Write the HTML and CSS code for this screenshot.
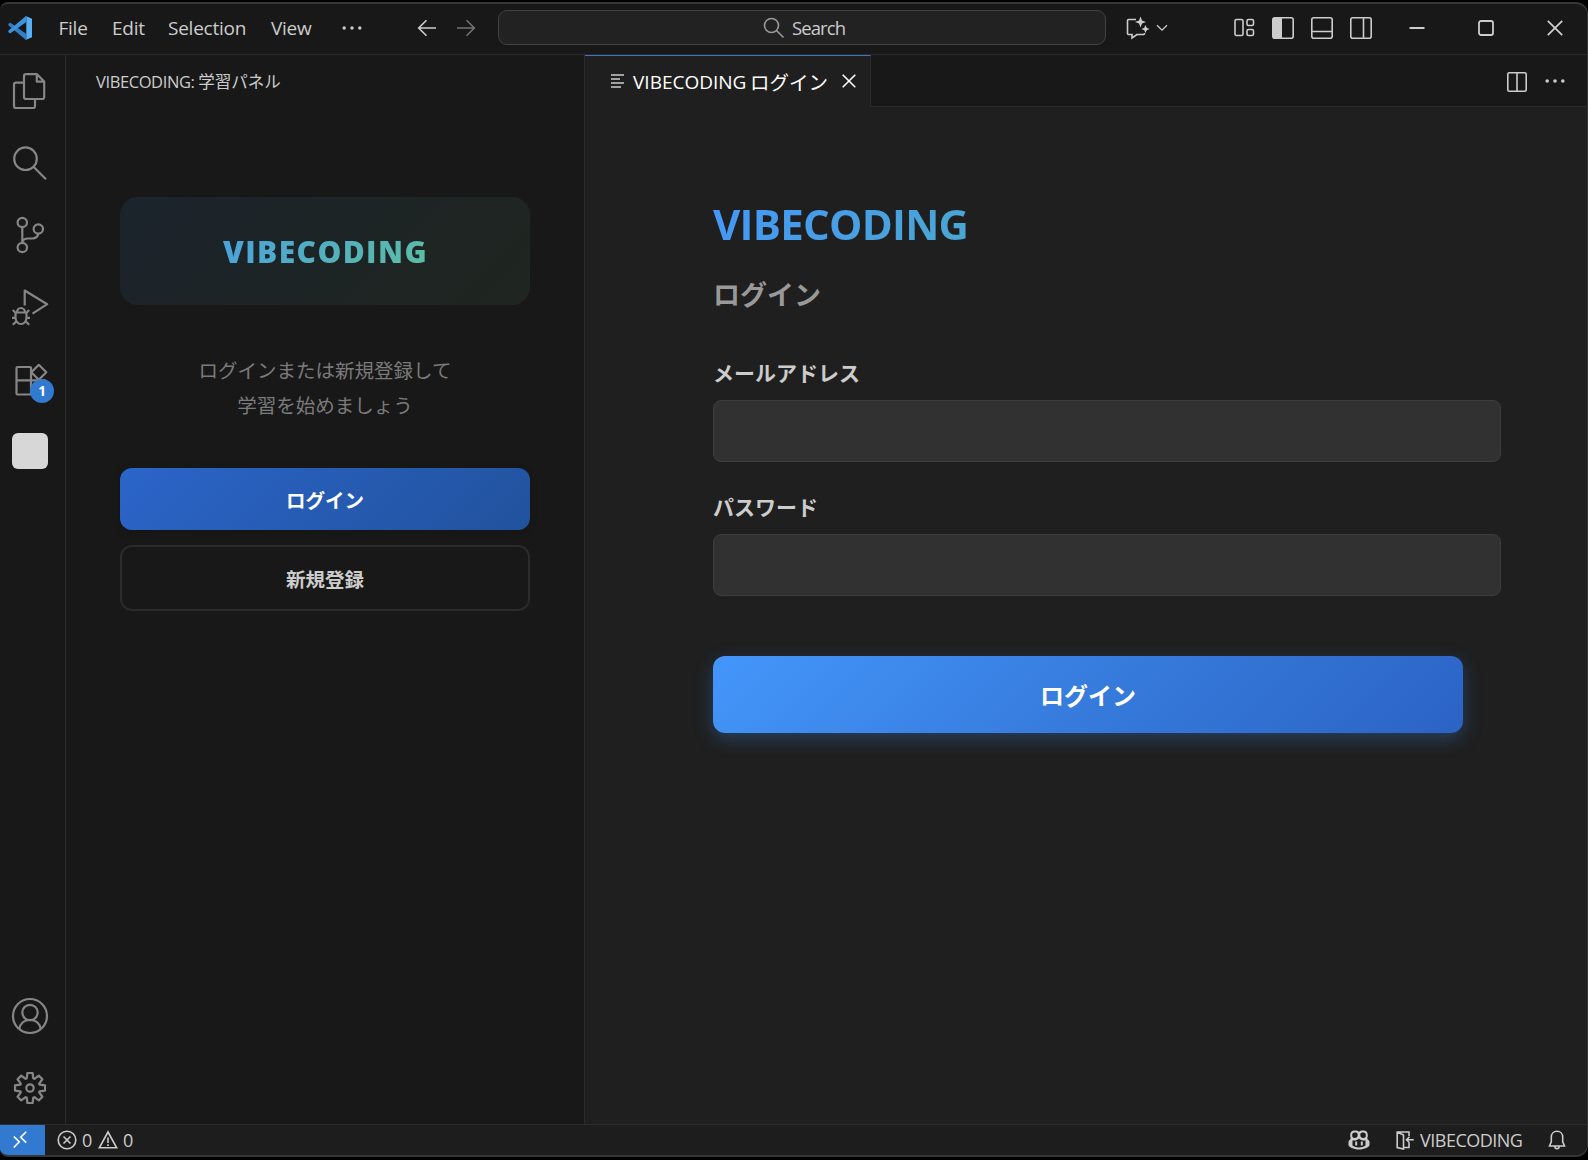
FILE: index.html
```html
<!DOCTYPE html>
<html lang="ja">
<head>
<meta charset="utf-8">
<title>VIBECODING ログイン</title>
<link rel="stylesheet" href="styles.css">
</head>
<body>
<div class="window">
  <header class="titlebar">
    <svg class="logo" viewBox="0 0 24 24"><path d="M.3 8.1 2 6.600 18 17.800V24L.3 9.300z" fill="#2f7fc9"/><path d="M.3 15.900 2 17.400 18 6.200V0L.3 14.700z" fill="#3c93dd"/><path d="M17.600 0 24 2.800v18.400L17.600 24c.5-.6.7-1 .7-2V2c0-1-.2-1.400-.7-2z" fill="#57b0f4"/></svg>
    <nav class="menu">
      <span class="m-file">File</span><span class="m-edit">Edit</span><span class="m-sel">Selection</span><span class="m-view">View</span>
      <svg class="m-dots" width="20" height="6" viewBox="0 0 20 6"><g fill="#ccc"><circle cx="2.200" cy="3" r="1.700"/><circle cx="10" cy="3" r="1.700"/><circle cx="17.800" cy="3" r="1.700"/></g></svg>
    </nav>
    <div class="history">
      <svg width="20" height="18" viewBox="0 0 20 18"><path class="ln" d="M19 9H2M9.500 1.200 1.700 9l7.800 7.800"/></svg>
      <svg class="off" width="20" height="18" viewBox="0 0 20 18"><path class="ln" d="M1 9h17M10.500 1.200 18.300 9l-7.800 7.800"/></svg>
    </div>
    <div class="command">
      <svg width="22" height="22" viewBox="0 0 22 22"><g class="ln dim"><circle cx="8.500" cy="8.500" r="7"/><path d="m13.500 13.500 7 7"/></g></svg>
      <span>Search</span>
    </div>
    <div class="chat">
      <svg width="25" height="24" viewBox="0 0 25 24"><path class="ln" d="M11 3.500H3.500a1 1 0 0 0-1 1v13a1 1 0 0 0 1 1H7V22l5-3.500h6.500a1 1 0 0 0 1-1V17"/><path fill="#ccc" d="m15.500.5 1.500 4 4 1.500-4 1.500-1.500 4-1.500-4-4-1.500 4-1.500zM20.500 9l1.200 2.800 2.800 1.200-2.800 1.200-1.200 2.800-1.200-2.800-2.800-1.200 2.800-1.200z"/></svg>
      <svg width="12" height="8" viewBox="0 0 12 8"><path class="ln thin" d="m1 1.200 5 5 5-5"/></svg>
    </div>
    <div class="layouts">
      <svg width="22" height="22" viewBox="0 0 22 22"><g class="ln"><rect x="2" y="2.500" width="8" height="16" rx="1.500"/><rect x="14" y="2.500" width="6.500" height="6" rx="1.500"/><rect x="14" y="12.500" width="6.500" height="6" rx="1.500"/></g></svg>
      <svg width="22" height="22" viewBox="0 0 22 22"><rect class="ln" x=".8" y=".8" width="20.400" height="20.400" rx="2"/><path fill="#ccc" d="M1 1h9v20H1z"/></svg>
      <svg width="22" height="22" viewBox="0 0 22 22"><g class="ln"><rect x=".8" y=".8" width="20.400" height="20.400" rx="2"/><path d="M1 14.500h20"/></g></svg>
      <svg width="22" height="22" viewBox="0 0 22 22"><g class="ln"><rect x=".8" y=".8" width="20.400" height="20.400" rx="2"/><path d="M13.500 1v20"/></g></svg>
    </div>
    <div class="controls">
      <svg width="16" height="16" viewBox="0 0 16 16"><path class="ln win" d="M.5 8h15"/></svg>
      <svg width="16" height="16" viewBox="0 0 16 16"><rect class="ln win" x="1" y="1" width="14" height="14" rx="2"/></svg>
      <svg width="16" height="16" viewBox="0 0 16 16"><path class="ln win" d="m.8.8 14.400 14.400M15.200.8.8 15.200"/></svg>
    </div>
  </header>

  <div class="workbench">
    <aside class="activity">
      <svg viewBox="0 0 60 72"><path class="act" d="M24.500 27.700h-8.500a2 2 0 0 0-2 2V51a2 2 0 0 0 2 2h17a2 2 0 0 0 2-2v-6.500M26 19.200h11l7.200 7.300V42a2 2 0 0 1-2 2H26a2 2 0 0 1-2-2V21.200a2 2 0 0 1 2-2zM36.800 19.500v7.200h7.200"/></svg>
      <svg viewBox="0 0 60 72"><g class="act"><circle cx="25.500" cy="31.700" r="11.300"/><path d="M33.700 39.900 46 52.300"/></g></svg>
      <svg viewBox="0 0 60 72"><g class="act"><circle cx="22.300" cy="23.500" r="4.700"/><circle cx="22.300" cy="48.500" r="4.700"/><circle cx="38.300" cy="30" r="4.700"/><path d="M22.300 28.400v15.200M38.300 34.900c-.8 3-3 4.600-6 4.600h-4.300c-3.500 0-5.300 1.600-5.700 4"/></g></svg>
      <svg viewBox="0 0 60 72"><g class="act"><path d="M24.700 34.500V19.500L47.200 33.200 32.500 42.700"/><path d="M15.500 43v3.500a5.500 6.500 0 0 0 11 0V43a1.500 1.500 0 0 0-1.500-1.500h-8a1.500 1.500 0 0 0-1.500 1.500zM17 41.500a4 4.500 0 0 1 8 0M12 46.800h3.500M26.500 46.800H30M12.800 39l3.200 3.200M29.200 39 26 42.200M12.800 53.800l3.700-3.600M29.200 53.800l-3.700-3.600"/></g></svg>
      <div class="ext">
        <svg viewBox="0 0 60 72"><path class="act" d="M17.500 24h12.500a1 1 0 0 1 1 1v26.500H17.500a1 1 0 0 1-1-1V25a1 1 0 0 1 1-1zM16.500 37.300h28.500v13.200a1 1 0 0 1-1 1H31M38.800 21.800l7.500 7.500-7.500 7.500-7.500-7.500z"/></svg>
        <span class="badge">1</span>
      </div>
      <div class="panel-slot"><i></i></div>
      <svg class="bottom" viewBox="0 0 60 72"><g class="act"><circle cx="30" cy="36" r="17"/><circle cx="30" cy="32.500" r="7.700"/><path d="M19.300 49c1-5.500 5-9 10.700-9s9.700 3.500 10.700 9"/></g></svg>
      <svg viewBox="0 0 60 72"><g class="act" transform="translate(30 36)"><circle r="3.700"/><path d="M-3.300-9.600-2.600-15h5.200l.7 5.400 1.150.45 4.310-3.290 3.680 3.680-3.290 4.310.45 1.150L15-2.600v5.200l-5.400.7-.45 1.150 3.290 4.310-3.680 3.680-4.310-3.290-1.150.45L2.600 15h-5.200l-.7-5.400-1.150-.45-4.310 3.290-3.680-3.680 3.290-4.310-.45-1.150L-15 2.600v-5.200l5.400-.7.45-1.150-3.290-4.310 3.680-3.680 4.310 3.290z"/></g></svg>
    </aside>

    <aside class="sidebar">
      <h2 class="side-title">VIBECODING: <b>学習パネル</b></h2>
      <div class="side-body">
        <div class="card"><span>VIBECODING</span></div>
        <p class="lead">ログインまたは新規登録して<br>学習を始めましょう</p>
        <button class="btn primary">ログイン</button>
        <button class="btn outline">新規登録</button>
      </div>
    </aside>

    <main class="editor">
      <div class="tabs">
        <div class="tab">
          <svg class="file" width="14" height="16" viewBox="0 0 14 16"><path class="ln" d="M0 1h13M0 5h9M0 9h13M0 13h10"/></svg>
          <span class="tab-name">VIBECODING</span><span class="tab-jp">ログイン</span>
          <svg class="x" width="14" height="16" viewBox="0 0 14 16"><path class="ln bright" d="m.7.7 12.600 12.600M13.300.7.7 13.300"/></svg>
        </div>
        <div class="tab-actions">
          <svg width="20" height="20" viewBox="0 0 20 20"><g class="ln"><rect x=".8" y=".8" width="18.400" height="18.400" rx="1.500"/><path d="M10 1v18"/></g></svg>
          <svg width="20" height="8" viewBox="0 0 20 8"><g fill="#ccc"><circle cx="2.200" cy="3" r="1.800"/><circle cx="10" cy="3" r="1.800"/><circle cx="17.800" cy="3" r="1.800"/></g></svg>
        </div>
      </div>
      <form class="login">
        <h1>VIBECODING</h1>
        <h2>ログイン</h2>
        <label for="mail">メールアドレス</label>
        <input id="mail" type="email">
        <label for="pass">パスワード</label>
        <input id="pass" type="password">
        <button class="submit" type="button">ログイン</button>
      </form>
    </main>
  </div>

  <footer class="status">
    <div class="remote"><svg width="14" height="18" viewBox="0 0 14 18"><path class="ln white" d="m.8 5.500 5.500 5.300L.8 16.500M13.200.8 7.700 6.300l5.500 5.300"/></svg></div>
    <div class="problems">
      <svg width="20" height="20" viewBox="0 0 20 20"><g class="ln"><circle cx="10" cy="10" r="8.800"/><path d="m6.500 6.500 7 7M13.500 6.500l-7 7"/></g></svg><span>0</span>
      <svg width="20" height="20" viewBox="0 0 20 20"><path class="ln" d="M10 2 1.300 17.800h17.400zM10 7.500v5.500M10 14.300v1.800"/></svg><span>0</span>
    </div>
    <div class="right">
      <svg class="copilot" width="22" height="20" viewBox="0 0 22 20"><path fill="#ccc" fill-rule="evenodd" d="M7 .5c1.800 0 3.200.4 4 1.300.8-.9 2.200-1.300 4-1.300 3.500 0 4.800 1.800 4.800 4.800 0 1.200-.2 2-.5 2.700l.4 1.500c1 .5 1.800 1.500 1.800 2.700V15c0 1.800-5 4.500-10.500 4.500S.5 16.800.5 15v-2.800c0-1.200.8-2.200 1.800-2.700L2.700 8c-.3-.7-.5-1.500-.5-2.700C2.200 2.300 3.500.5 7 .5zM6.800 2.500C4.800 2.500 4.200 3.300 4.200 5.300S4.800 8 6.500 8c2.200 0 3.200-1 3.200-3.300 0-1.600-.9-2.200-2.900-2.200zm8.400 0c-2 0-2.900.6-2.900 2.200 0 2.300 1 3.300 3.200 3.300 1.700 0 2.300-.7 2.300-2.700s-.6-2.800-2.600-2.800zM4.500 10.500v5c1.600 1.200 4 2 6.500 2s4.900-.8 6.500-2v-5c-3 .3-5-.3-6.500-2-1.500 1.700-3.500 2.300-6.500 2zM7.200 11.500h2v4h-2zm5.600 0h2v4h-2z"/></svg>
      <svg class="door" width="18" height="20" viewBox="0 0 18 20"><path class="ln" d="M13 6V2H1.200v15.500L7.500 19V5L1.200 2M7.500 17.500H13V13M17.800 9.700h-7M13.500 6.700l-3 3 3 3"/></svg>
      <span class="account">VIBECODING</span>
      <svg class="bell" width="18" height="20" viewBox="0 0 18 20"><path class="ln" d="M9 1.300c-3.400 0-5.700 2.500-5.700 5.700v4.800L1.500 16h15l-1.800-4.200V7c0-3.200-2.300-5.700-5.700-5.700zM6.800 16c0 3.600 4.400 3.600 4.400 0"/></svg>
    </div>
  </footer>
</div>
</body>
</html>
```
FILE: styles.css
```css
* { box-sizing: border-box; }

body {
  margin: 0;
  height: 1160px;
  padding: 2px 0 3px;
  overflow: hidden;
  background: #000;
  color: #ccc;
  font-family: "Open Sans", "Noto Sans CJK JP", sans-serif;
}

svg { display: block; flex: none; }
h1, h2, p { margin: 0; }
button, input { font-family: inherit; }

.ln { fill: none; stroke: #ccc; stroke-width: 1.6; }
.ln.dim { stroke: #9a9a9a; }
.ln.thin { stroke-width: 1.3; }
.ln.win { stroke-width: 1.8; }
.ln.bright, .ln.white { stroke: #fff; }
.act { fill: none; stroke: #868686; stroke-width: 2.2; stroke-linejoin: round; }

.window {
  height: 1155px;
  display: flex;
  flex-direction: column;
  border: solid #363636;
  border-width: 2px 1px 2px 0;
  border-radius: 8px 12px 12px 8px;
  overflow: hidden;
  background: #181818;
}

.titlebar {
  height: 51px;
  flex: none;
  display: flex;
  align-items: center;
  padding: 0 0 3px 8px;
  border-bottom: 1px solid #2b2b2b;
  font-size: 19px;
  line-height: 26px;
}
.logo { width: 24px; height: 24px; }
.menu { display: flex; align-items: center; margin-left: 26.500px; width: 358.500px; letter-spacing: -.25px; }
.m-file { width: 53.500px; }
.m-edit { width: 56px; }
.m-sel { width: 103px; }
.m-view { width: 71px; }
.history { display: flex; gap: 19px; width: 81px; }
.history .off { opacity: .5; }
.command {
  width: 608px;
  height: 35px;
  display: flex;
  align-items: center;
  justify-content: center;
  gap: 7px;
  padding-left: 4px;
  background: #222;
  border: 1px solid #424242;
  border-radius: 9px;
  font-size: 18.500px;
  letter-spacing: -.9px;
}
.chat { display: flex; align-items: center; gap: 6px; margin-left: 19px; width: 108px; }
.layouts { display: flex; gap: 17px; width: 175.500px; }
.controls { display: flex; gap: 53px; }

.workbench { flex: 1; display: flex; min-height: 0; }

.activity {
  width: 66px;
  flex: none;
  display: flex;
  flex-direction: column;
  border-right: 1px solid #2b2b2b;
}
.activity svg { width: 60px; height: 72px; }
.activity .bottom { margin-top: auto; }
.ext { position: relative; }
.badge {
  position: absolute;
  left: 30px;
  top: 36px;
  width: 24px;
  height: 24px;
  border-radius: 50%;
  background: #3279d0;
  color: #fff;
  font-size: 13.500px;
  font-weight: 700;
  line-height: 25px;
  text-align: center;
}
.panel-slot { height: 72px; padding: 18px 12px; }
.panel-slot i { display: block; width: 36px; height: 36px; border-radius: 6px; background: #d7d7d7; }

.sidebar { width: 519px; flex: none; border-right: 1px solid #2b2b2b; }
.side-title {
  height: 52px;
  padding-left: 30px;
  font-size: 16.500px;
  font-weight: 400;
  line-height: 53px;
  letter-spacing: -.4px;
}
.side-title b { font-weight: 400; letter-spacing: 0; }
.side-body { padding: 90px 54px 0; display: flex; flex-direction: column; }
.card {
  height: 108px;
  padding: 0 24px;
  border-radius: 18px;
  background: linear-gradient(135deg, #1b232c, #1d2425 50%, #1f2620);
  text-align: center;
  line-height: 109px;
}
.card span {
  display: block;
  font-size: 30px;
  font-weight: 800;
  letter-spacing: 1.400px;
  text-indent: 1px;
  background: linear-gradient(135deg, #4093f8, #66cc88);
  -webkit-background-clip: text;
  background-clip: text;
  color: transparent;
}
.lead {
  margin-top: 48px;
  text-align: center;
  font-size: 19.500px;
  line-height: 35px;
  color: #7b7b7b;
}
.btn {
  padding: 0;
  border: 0;
  border-radius: 12px;
  font-size: 19.500px;
  font-weight: 600;
  color: #fff;
}
.primary {
  height: 62px;
  margin-top: 45px;
  background: linear-gradient(135deg, #2b65c9, #21529d);
  box-shadow: 0 2px 8px rgba(0, 0, 0, .15);
}
.outline {
  height: 66px;
  margin-top: 15px;
  background: transparent;
  border: 2px solid #2b2b2b;
  color: #ccc;
}

.editor { flex: 1; min-width: 0; background: #1f1f1f; }
.tabs { height: 52px; display: flex; }
.tab {
  width: 286px;
  display: flex;
  align-items: center;
  padding-left: 26px;
  border-top: 1px solid #3d76c0;
  border-right: 1px solid #2b2b2b;
  color: #fff;
  font-size: 19px;
}
.tab-name { margin-left: 8px; width: 117px; }
.tab-jp { width: 92px; font-size: 19.500px; }
.tab-actions {
  flex: 1;
  display: flex;
  align-items: center;
  justify-content: flex-end;
  gap: 18px;
  padding: 2px 22px 0 0;
  background: #181818;
  border-bottom: 1px solid #2b2b2b;
}

.login {
  width: 878px;
  padding: 89px 0 0 128px;
  display: flex;
  flex-direction: column;
}
.login h1 {
  width: 750px;
  height: 56px;
  font-size: 42px;
  font-weight: 700;
  line-height: 56px;
  letter-spacing: -.75px;
  background: linear-gradient(135deg, #4496fb, #56c389);
  -webkit-background-clip: text;
  background-clip: text;
  color: transparent;
}
.login h2 {
  margin-top: 25px;
  height: 36px;
  font-size: 27px;
  font-weight: 600;
  line-height: 36px;
  color: #999;
}
.login label {
  margin-top: 45px;
  height: 30px;
  font-size: 21px;
  font-weight: 600;
  line-height: 30px;
}
.login input {
  width: 788px;
  height: 62px;
  margin-top: 12px;
  background: #313131;
  border: 1px solid #3c3c3c;
  border-radius: 8px;
}
.login input + label { margin-top: 30px; }
.submit {
  width: 750px;
  height: 77px;
  margin-top: 60px;
  padding: 0;
  border: 0;
  border-radius: 12px;
  background: linear-gradient(135deg, #4496fb, #3579da 55%, #2b63c5);
  box-shadow: 0 6px 18px rgba(55, 125, 215, .35);
  color: #fff;
  font-size: 24px;
  font-weight: 600;
}

.status {
  height: 31px;
  flex: none;
  display: flex;
  align-items: center;
  border-top: 1px solid #2e2e2e;
  background: #1d1d1d;
  font-size: 18px;
  line-height: 24px;
}
.remote {
  width: 45px;
  height: 100%;
  display: flex;
  align-items: center;
  padding-left: 13px;
  background: #3279d0;
}
.problems { display: flex; align-items: center; margin-left: 12px; }
.problems span { width: 16px; margin-left: 5px; }
.right { margin-left: auto; display: flex; align-items: center; padding-right: 21px; }
.door { margin-left: 26px; }
.account { margin-left: 6px; width: 128px; letter-spacing: -.5px; }
```
